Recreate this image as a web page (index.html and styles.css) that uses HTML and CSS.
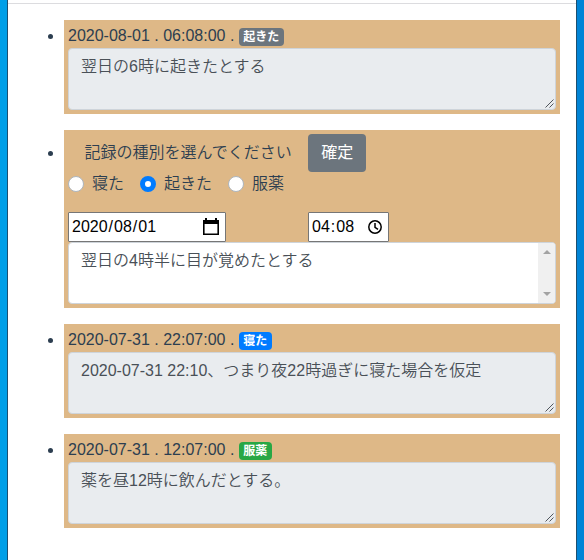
FILE: index.html
```html
<!DOCTYPE html>
<html lang="ja">
<head>
<meta charset="utf-8">
<title>記録</title>
<link rel="stylesheet" href="styles.css">
</head>
<body>
<main class="window">
  <ul class="records">
    <li class="record">
      <div class="heading">2020-08-01 . 06:08:00 . <span class="badge gray">起きた</span></div>
      <div class="memo readonly">翌日の6時に起きたとする<svg class="grip" viewBox="0 0 9 9"><path d="M.5 8.5l8-8M4.5 8.5l4-4"/></svg></div>
    </li>
    <li class="record editing">
      <div class="prompt"><span>記録の種別を選んでください</span><button class="confirm">確定</button></div>
      <div class="kinds">
        <label class="kind"><span class="radio"></span>寝た</label>
        <label class="kind"><span class="radio checked"></span>起きた</label>
        <label class="kind"><span class="radio"></span>服薬</label>
      </div>
      <div class="moment">
        <div class="field date"><span class="part">2020</span>/<span class="part">08</span>/<span class="part">01</span>
          <svg class="icon" viewBox="0 0 16 18"><path fill-rule="evenodd" d="M0 2h2V0h2v2h8V0h2v2h2v15H0zM1.6 6v9.4h12.8V6z"/></svg>
        </div>
        <div class="field time"><span class="part">04</span>:<span class="part">08</span>
          <svg class="icon clock" viewBox="0 0 14 14"><circle cx="7" cy="7" r="6.2"/><path d="M7 3v4.3l3 2"/></svg>
        </div>
      </div>
      <div class="memo">翌日の4時半に目が覚めたとする<span class="scrollbar"><i class="up"></i><i class="down"></i></span></div>
    </li>
    <li class="record">
      <div class="heading">2020-07-31 . 22:07:00 . <span class="badge blue">寝た</span></div>
      <div class="memo readonly">2020-07-31 22:10、つまり夜22時過ぎに寝た場合を仮定<svg class="grip" viewBox="0 0 9 9"><path d="M.5 8.5l8-8M4.5 8.5l4-4"/></svg></div>
    </li>
    <li class="record">
      <div class="heading">2020-07-31 . 12:07:00 . <span class="badge green">服薬</span></div>
      <div class="memo readonly">薬を昼12時に飲んだとする。<svg class="grip" viewBox="0 0 9 9"><path d="M.5 8.5l8-8M4.5 8.5l4-4"/></svg></div>
    </li>
  </ul>
</main>
</body>
</html>
```
FILE: styles.css
```css
* { box-sizing: border-box; }
body {
  margin: 0;
  height: 560px;
  overflow: hidden;
  padding: 0 7px;
  background: linear-gradient(90deg, #009fe8 0 50%, #0084d6 50%);
  color: #2c3e50;
  font: 350 16px/24px "Liberation Sans", "Noto Sans CJK JP", sans-serif;
}
.window {
  height: 560px;
  border: solid #1d4f70;
  border-width: 0 1px;
  background: #fff;
  padding-top: 3px;
}
.records {
  list-style: none;
  margin: 0;
  border-top: 1px solid #dcdcdf;
  padding: 16px 16px 0 56px;
}
.record {
  position: relative;
  height: 94px;
  margin-bottom: 16px;
  padding: 4px;
  background: #deb887;
}
.record.editing { height: 178px; }
.record::before {
  content: "";
  position: absolute;
  left: -16px;
  top: 14px;
  width: 5px;
  height: 5px;
  border-radius: 50%;
  background: #2c3e50;
}
.editing::before { top: 21px; }
.heading {
  display: flex;
  align-items: flex-start;
  height: 24px;
  white-space: pre;
}
.badge {
  height: 18px;
  margin-top: 4px;
  padding: 0 4.5px;
  border-radius: 4px;
  color: #fff;
  font-size: 12px;
  font-weight: 700;
  line-height: 18px;
}
.gray { background: #6c757d; }
.blue { background: #007bff; }
.green { background: #28a745; }
.memo {
  position: relative;
  height: 62px;
  padding: 6px 12px;
  border: 1px solid #ced4da;
  border-radius: 4px;
  background: #fff;
  color: #495057;
}
.memo.readonly { background: #e9ecef; }
.grip {
  position: absolute;
  right: 1px;
  bottom: 1px;
  width: 9px;
  height: 9px;
  fill: none;
  stroke: #50565c;
}
.scrollbar {
  position: absolute;
  top: 0;
  right: 0;
  width: 17px;
  height: 60px;
  padding: 7px 5px;
  display: flex;
  flex-direction: column;
  justify-content: space-between;
  border-radius: 0 3px 3px 0;
  background: #f0f0f0;
}
.up, .down {
  border: 4px solid transparent;
  border-width: 0 4px 4px;
  border-bottom-color: #a3a3a3;
}
.down {
  border-width: 4px 4px 0;
  border-top-color: #a3a3a3;
}
.prompt {
  display: flex;
  align-items: center;
  gap: 16px;
  height: 38px;
  padding-left: 16.5px;
}
.confirm {
  height: 38px;
  margin-left: .5px;
  padding: 0 13px;
  border: 0;
  border-radius: 4px;
  background: #6c757d;
  color: #fff;
  font: inherit;
  font-weight: 400;
}
.kinds {
  display: flex;
  gap: 16px;
  height: 24px;
}
.kind {
  display: flex;
  gap: 8px;
}
.radio {
  width: 16px;
  height: 16px;
  margin-top: 4px;
  border: 1px solid #adb5bd;
  border-radius: 50%;
  background: #fff;
}
.radio.checked {
  border: 5px solid #007bff;
}
.moment {
  display: flex;
  gap: 82px;
  margin-top: 16px;
}
.field {
  display: flex;
  align-items: center;
  height: 30px;
  border: 1px solid #767676;
  border-radius: 1px;
  padding: 0 6px 0 2px;
  background: #fff;
  color: #000;
}
.part { padding: 0 1px; }
.date { width: 158px; }
.time { width: 81px; }
.icon {
  width: 16px;
  height: 18px;
  margin-left: auto;
}
.clock {
  width: 14px;
  height: 14px;
  fill: none;
  stroke: #000;
  stroke-width: 1.5;
}
```
